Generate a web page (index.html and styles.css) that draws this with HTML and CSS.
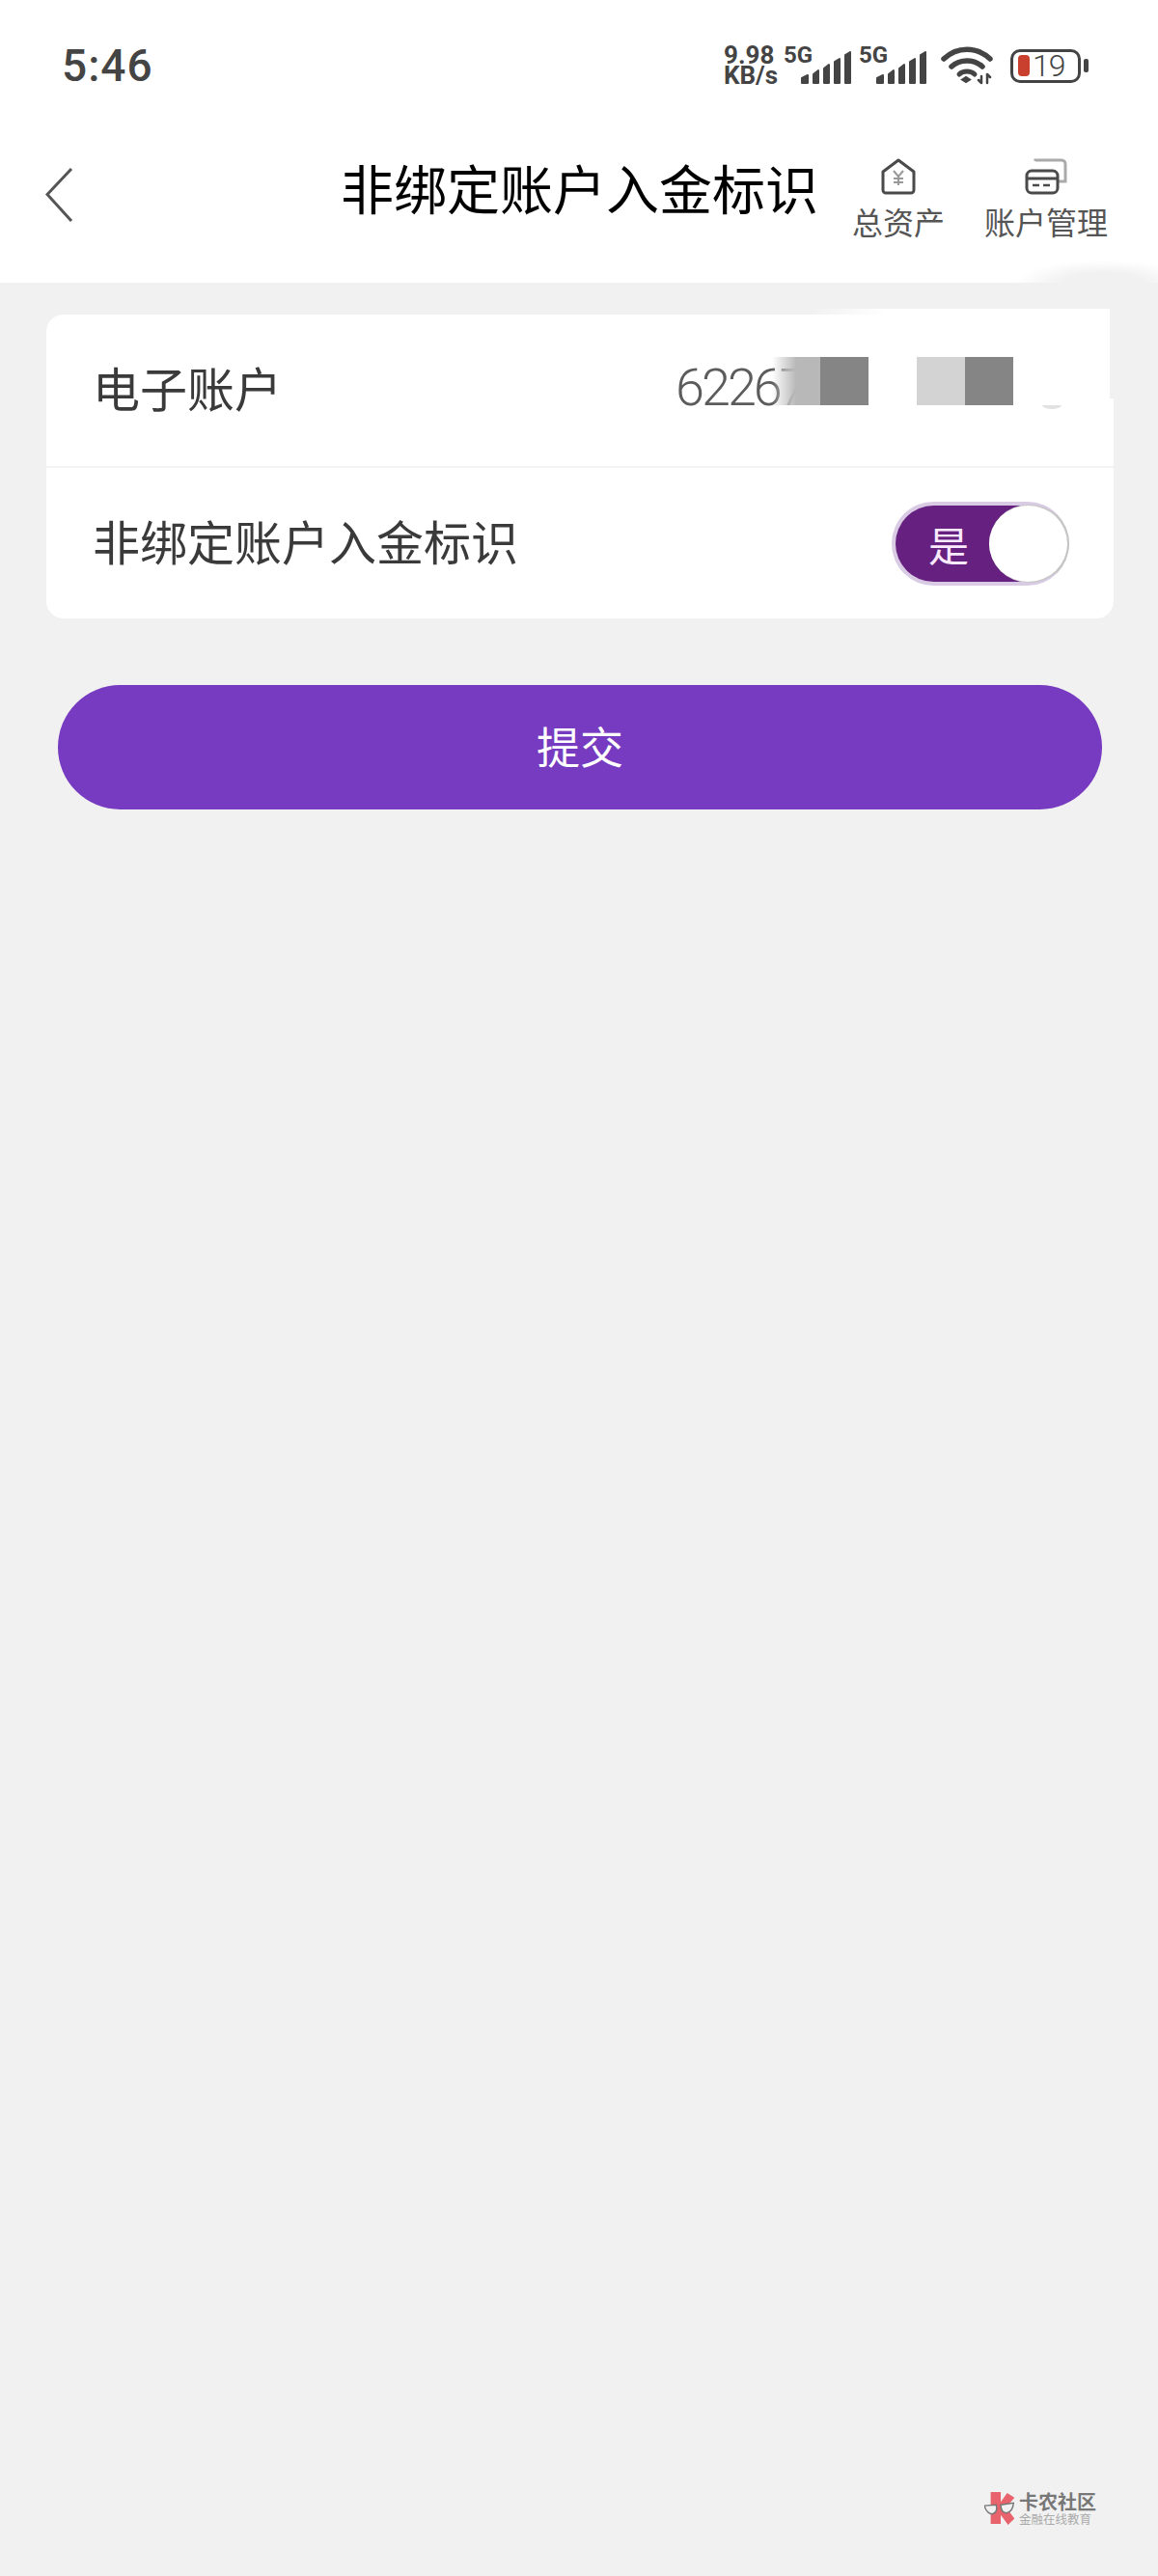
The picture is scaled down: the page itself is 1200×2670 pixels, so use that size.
FILE: index.html
```html
<!DOCTYPE html>
<html lang="zh-CN">

<head>
    <meta charset="UTF-8">
    <meta name="viewport" content="width=device-width, initial-scale=1.0">
    <title>非绑定账户入金标识</title>
    <link rel="stylesheet" href="styles.css">
</head>

<body>
    <div class="phone">
        <header class="top">
            <div class="status-bar">
                <span class="time">5:46</span>
                <div class="status-icons">
                    <span class="net-speed">9.98<br>KB/s</span>
                    <div class="sim">
                        <span class="sim-label">5G</span>
                        <svg class="bars" width="52" height="34" viewBox="0 0 52 34" fill="#444" stroke="#444" stroke-width="2" stroke-linejoin="round">
                            <path d="M1 28L7 25V33H1z" />
                            <path d="M13 24L18 20V33H13z" />
                            <path d="M24 18L29 14V33H24z" />
                            <path d="M35 11L40 8V33H35z" />
                            <path d="M46 4L51 1V33H46z" />
                        </svg>
                    </div>
                    <div class="sim">
                        <span class="sim-label">5G</span>
                        <svg class="bars" width="52" height="34" viewBox="0 0 52 34" fill="#444" stroke="#444" stroke-width="2" stroke-linejoin="round">
                            <path d="M1 28L7 25V33H1z" />
                            <path d="M13 24L18 20V33H13z" />
                            <path d="M24 18L29 14V33H24z" />
                            <path d="M35 11L40 8V33H35z" />
                            <path d="M46 4L51 1V33H46z" />
                        </svg>
                    </div>
                    <svg class="wifi" width="54" height="40" viewBox="0 0 54 40" fill="none" stroke="#444" stroke-linecap="round">
                        <path d="M3 13c14 -13 34 -13 48 0" stroke-width="5.500" />
                        <path d="M11 21c9 -8 23 -8 32 0" stroke-width="5.500" />
                        <path d="M19 29c4 -4 12 -4 16 0" stroke-width="5" />
                        <path d="M22 34.500l4 -2.500 4 2.500 -4 2.500z" fill="#444" stroke-width="2" />
                        <path d="M42 31v7M39 35l3 3M48 38v-9M48 29l3 3" stroke-width="2.500" />
                    </svg>
                    <div class="battery">
                        <div class="battery-body">
                            <span class="battery-level"></span>
                            <span class="battery-num">19</span>
                        </div>
                        <span class="battery-tip"></span>
                    </div>
                </div>
            </div>
            <nav class="nav">
                <svg class="back" width="30" height="58" viewBox="0 0 30 58" fill="none" stroke="#555" stroke-width="3">
                    <path d="M27 2L2 28.500L27 56" />
                </svg>
                <h1 class="title">非绑定账户入金标识</h1>
                <div class="nav-actions">
                    <div class="nav-action">
                        <svg width="36" height="38" viewBox="0 0 36 38" fill="none" stroke="#4a4a4a" stroke-width="3">
                            <path d="M18 2L34 14V33a3 3 0 0 1 -3 3H5a3 3 0 0 1 -3 -3V14z" stroke-linejoin="round" />
                            <path d="M13 13l5 6 5 -6M18 19v9M13 21h10M13 25h10" stroke="#999" stroke-width="2" />
                        </svg>
                        <span>总资产</span>
                    </div>
                    <div class="nav-action">
                        <svg width="44" height="38" viewBox="0 0 44 38" fill="none" stroke="#4a4a4a" stroke-width="3">
                            <path d="M11 3V2h27a4 4 0 0 1 4 4v18h-7" stroke="#aaa" />
                            <rect x="2" y="13" width="32" height="23" rx="5" />
                            <path d="M2 21h32" />
                            <path d="M8 28h7M19 28h7" stroke-width="2.500" />
                        </svg>
                        <span>账户管理</span>
                    </div>
                </div>
            </nav>
            <span class="smear"></span>
        </header>

        <main class="content">
            <section class="card">
                <div class="row">
                    <span class="row-label">电子账户</span>
                    <span class="account-no">62267</span>
                </div>
                <div class="row">
                    <span class="row-label">非绑定账户入金标识</span>
                    <div class="switch">
                        <span class="switch-text">是</span>
                        <span class="switch-knob"></span>
                    </div>
                </div>
                <!-- mosaic over the account number -->
                <div class="mask">
                    <span class="mask-fade"></span>
                    <span class="mask-block dark"></span>
                    <span class="mask-gap"></span>
                    <span class="mask-block light"></span>
                    <span class="mask-block dark"></span>
                    <span class="mask-peek"></span>
                </div>
            </section>
            <button class="submit" type="button">提交</button>
        </main>

        <div class="watermark">
            <svg width="36" height="36" viewBox="0 0 38 36">
                <path d="M7 0H18V11L25 1L33 6L24 17L33 29L26 36L18 25V35H7z" fill="#e8636c" />
                <path d="M0 15L13 14Q15 22 9 24Q3 24 0 15zM18 14L32 12Q31 22 24 23Q18 22 18 14z" fill="#f1f1f1" stroke="#777" stroke-width="1.500" />
            </svg>
            <div class="watermark-text">
                <span class="watermark-name">卡农社区</span>
                <span class="watermark-sub">金融在线教育</span>
            </div>
        </div>
    </div>
</body>

</html>
```

FILE: styles.css
```css
* {
    box-sizing: border-box;
}

body {
    margin: 0;
    font-family: "Noto Sans CJK SC", "Noto Sans", sans-serif;
    background-color: #f1f1f1;
}

.phone {
    position: relative;
    height: 2670px;
    overflow: hidden;
}

.top {
    position: relative;
    height: 293px;
    background: #fff;
}

.smear {
    position: absolute;
    left: 1050px;
    top: 270px;
    width: 150px;
    height: 23px;
    background: radial-gradient(ellipse 60% 100% at 62% 100%, #f1f1f1 45%, rgba(241, 241, 241, 0) 100%);
}

.status-bar {
    display: flex;
    justify-content: space-between;
    align-items: center;
    height: 136px;
    padding: 0 72px 0 64px;
}

.time {
    font-family: Roboto, sans-serif;
    font-size: 46px;
    font-weight: 500;
    letter-spacing: 1px;
    color: #444;
}

.status-icons {
    display: flex;
    align-items: center;
    gap: 8px;
    color: #444;
}

.net-speed {
    width: 54px;
    font-family: Roboto, sans-serif;
    font-size: 26px;
    font-weight: 700;
    line-height: 21px;
    white-space: nowrap;
}

.sim {
    position: relative;
    width: 70px;
    height: 40px;
    padding-bottom: 1px;
    display: flex;
    justify-content: flex-end;
    align-items: flex-end;
}

.sim-label {
    position: absolute;
    left: 0;
    top: -5px;
    font-family: Roboto, sans-serif;
    font-size: 24px;
    font-weight: 700;
}

.wifi {
    margin-left: 7px;
}

.battery {
    display: flex;
    align-items: center;
    gap: 3px;
    margin-left: 10px;
}

.battery-body {
    display: flex;
    align-items: center;
    width: 73px;
    height: 35px;
    padding-left: 5px;
    border: 3px solid #444;
    border-radius: 10px;
}

.battery-level {
    width: 12px;
    height: 22px;
    background: #c9402e;
    border-radius: 4px;
}

.battery-num {
    margin-left: 3px;
    font-family: Roboto, sans-serif;
    font-size: 32px;
    font-weight: 300;
    letter-spacing: -1px;
    line-height: 1;
}

.battery-tip {
    width: 5px;
    height: 14px;
    background: #444;
    border-radius: 2px;
}

.nav {
    position: relative;
    display: flex;
    align-items: center;
    height: 157px;
    padding-left: 47px;
}

.back {
    margin-top: -26px;
}

.title {
    margin: -44px 0 0 276px;
    font-size: 55px;
    font-weight: 400;
    white-space: nowrap;
    color: #000;
}

.nav-actions {
    display: flex;
    gap: 41px;
    margin: -13px 0 0 35px;
}

.nav-action {
    display: flex;
    flex-direction: column;
    align-items: center;
    gap: 3px;
    font-size: 32px;
    line-height: 48px;
    white-space: nowrap;
    color: #555;
}

.content {
    padding: 33px 46px 0 48px;
}

.card {
    position: relative;
    background: #fff;
    border-radius: 18px;
}

.row {
    display: flex;
    justify-content: space-between;
    align-items: center;
    height: 157px;
    padding: 0 46px 0 48px;
}

.row+.row {
    height: 158px;
    border-top: 2px solid #f3f3f3;
}

.row-label {
    margin-bottom: 8px;
    font-size: 49px;
    color: #3a3a3a;
}

.account-no {
    position: absolute;
    left: 652px;
    top: 44px;
    font-family: Roboto, sans-serif;
    font-size: 54px;
    font-weight: 300;
    letter-spacing: -3px;
    line-height: 1.2;
    color: #5c5c5c;
}

.switch {
    position: relative;
    display: flex;
    align-items: center;
    width: 184px;
    height: 87px;
    padding-left: 34px;
    background: #662180;
    border: 4px solid #d9cbe4;
    border-right-color: #c8c8c8;
    border-radius: 44px;
}

.switch-text {
    font-size: 42px;
    color: #fbeaff;
}

.switch-knob {
    position: absolute;
    right: -2px;
    top: 0;
    width: 81px;
    height: 79px;
    background: #fff;
    border-radius: 50%;
    box-shadow: 1px 0 0 1px #c6c6c6;
}

.mask {
    position: absolute;
    left: 752px;
    top: -6px;
    display: flex;
    align-items: flex-end;
    width: 350px;
    height: 100px;
    background: linear-gradient(to right, #f1f1f1 40px, #fff 120px) no-repeat top / 100% 6px, linear-gradient(to right, rgba(255, 255, 255, 0), #fff 45px) no-repeat bottom / 100% 94px;
}

/* the patch cuts the card's top right corner off */
.mask::after {
    content: "";
    position: absolute;
    left: 100%;
    top: 0;
    width: 6px;
    height: 93px;
    background: #f1f1f1;
}

.mask-fade {
    width: 50px;
    height: 50px;
    background: linear-gradient(to right, rgba(184, 184, 184, 0), #b8b8b8 50%);
}

.mask-block {
    width: 50px;
    height: 50px;
}

.mask-gap {
    width: 50px;
}

.mask-block.dark {
    background: #858585;
}

.mask-block.light {
    background: #d3d3d3;
}

.mask-peek {
    width: 20px;
    height: 4px;
    margin: 0 0 -4px 30px;
    background: #e2e2e2;
    border-radius: 0 0 10px 10px / 0 0 4px 4px;
}

.submit {
    display: block;
    width: 1082px;
    height: 129px;
    margin: 69px 0 0 12px;
    padding: 0 0 5px;
    border: none;
    border-radius: 65px;
    background-color: #763bc0;
    font-family: inherit;
    font-size: 45px;
    color: #fff;
}

.watermark {
    position: absolute;
    left: 1020px;
    top: 2582px;
    display: flex;
    gap: 0;
}

.watermark-text {
    display: flex;
    flex-direction: column;
}

.watermark-name {
    font-size: 20px;
    font-weight: 700;
    line-height: 22px;
    color: #777;
}

.watermark-sub {
    font-size: 12.500px;
    line-height: 14px;
    color: #aaa;
}
```
